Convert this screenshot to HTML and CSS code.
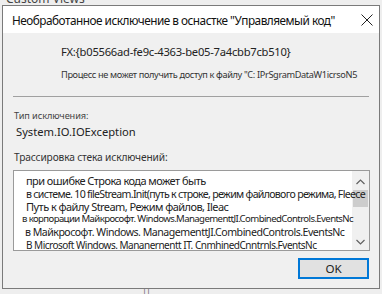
FILE: index.html
```html
<!DOCTYPE html>
<html lang="ru">
<head>
<meta charset="utf-8">
<link rel="stylesheet" href="styles.css">
</head>
<body>
<div class="desk">
  <div class="behind">Custom Views</div>
  <div class="dialog">
    <div class="titlebar">
      <span class="title">Необработанное исключение в оснастке "Управляемый код"</span>
      <svg class="close" width="12" height="12" viewBox="0 0 12 12"><path d="M0.5 0.5 L11.5 11.5 M11.5 0.5 L0.5 11.5" stroke="#222" stroke-width="1" fill="none"/></svg>
    </div>
    <div class="body">
      <div class="head">
        <div class="fx">FX:{b05566ad-fe9c-4363-be05-7a4cbb7cb510}</div>
        <div class="msg">Процесс не может получить доступ к файлу "C: IPrSgramDataW1icrsoN5</div>
      </div>
      <div class="sep"></div>
      <div class="label">Тип исключения:</div>
      <div class="type">System.IO.IOException</div>
      <div class="label2">Трассировка стека исключений:</div>
      <div class="trace">
        <div class="lines">
          <div class="ln l1">при ошибке Строка кода может быть</div>
          <div class="ln l2">в системе. 10 fileStream.Init(путь к строке, режим файлового режима, Fleece</div>
          <div class="ln l3">Путь к файлу Stream, Режим файлов, Ileac</div>
          <div class="ln l4">в корпорации Майкрософт. Windows.ManagementtJI.CombinedControls.EventsNc</div>
          <div class="ln l5">в Майкрософт. Windows. ManagementtJI.CombinedControls.EventsNc</div>
          <div class="ln l6">B Microsoft Windows. Mananernentt IT. CnmhinedCnntrnls.FventsNc</div>
        </div>
        <div class="scroll">
          <svg class="arr" width="9" height="6" viewBox="0 0 9 6"><path d="M0.5 5 L4.5 1 L8.5 5" stroke="#606060" stroke-width="1.2" fill="none"/></svg>
          <div class="thumb"></div>
          <div class="track"></div>
          <svg class="arr" width="9" height="6" viewBox="0 0 9 6"><path d="M0.5 1 L4.5 5 L8.5 1" stroke="#606060" stroke-width="1.2" fill="none"/></svg>
        </div>
      </div>
      <div class="actions">
        <div class="ok">OK</div>
      </div>
    </div>
  </div>
  <div class="under">||</div>
</div>
</body>
</html>
```
FILE: styles.css
```css
html, body { margin: 0; padding: 0; }
body {
  width: 382px; height: 294px; overflow: hidden;
  background: #eeeeee;
  font-family: "Noto Sans", "Open Sans", sans-serif;
  color: #111;
}
.desk { position: relative; width: 382px; height: 294px; }
.behind {
  position: absolute; left: 6px; top: -10px;
  font-size: 12px; color: #444;
}
.under {
  position: absolute; left: 142px; top: 286px;
  font-size: 9px; color: #666; letter-spacing: -1px;
}
.dialog {
  position: absolute; left: 2px; top: 5px;
  width: 376px; height: 282px;
  border: 1px solid #7a7a7a;
  background: #f0f0f0;
  display: flex; flex-direction: column;
}
.titlebar {
  height: 27px; background: #fff;
  display: flex; align-items: center; justify-content: space-between;
  padding: 0 6px 0 9px;
  flex: none;
}
.title { font-size: 11.8px; letter-spacing: -0.5px; color: #111; white-space: nowrap; }
.close { display: block; flex: none; }
.body { flex: 1; display: flex; flex-direction: column; padding: 0 9px 0 10px; min-width: 0; }
.head { padding-left: 48px; }
.fx { margin-top: 11px; font-size: 11.2px; letter-spacing: -0.25px; color: #222; line-height: 16px; }
.msg { margin-top: 8px; font-size: 9.2px; letter-spacing: -0.35px; color: #333; white-space: nowrap; line-height: 13px; }
.sep { margin-top: 15px; height: 1px; background: #a0a0a0; margin-right: 1px; }
.label { margin-top: 13px; margin-left: 1px; font-size: 9.2px; color: #444; line-height: 12px; letter-spacing: -0.1px; }
.type { margin-top: 2px; margin-left: 3px; font-size: 11.2px; color: #222; line-height: 15px; }
.label2 { margin-top: 12px; margin-left: 1px; font-size: 10.2px; color: #333; line-height: 13px; letter-spacing: -0.15px; }
.trace {
  margin-top: 6px; height: 79px;
  border: 1px solid #9a9a9a; background: #fff;
  overflow: hidden;
  display: grid;
  grid-template-columns: minmax(0, 1fr) 17px;
  grid-template-rows: 79px;
}
.lines {
  grid-column: 1 / 3; grid-row: 1;
  padding-top: 4px; position: relative; z-index: 1;
  overflow: hidden; white-space: nowrap; min-width: 0;
}
.ln { line-height: 12.8px; color: #222; }
.l1, .l3 { font-size: 11px; padding-left: 12px; letter-spacing: -0.55px; }
.l2 { font-size: 10.6px; padding-left: 12px; letter-spacing: -0.7px; }
.l4 { font-size: 9.6px; padding-left: 8px; letter-spacing: -0.6px; }
.l5 { font-size: 10.6px; padding-left: 11px; letter-spacing: -0.5px; }
.l6 { font-size: 10px; padding-left: 12px; letter-spacing: -0.5px; }
.scroll {
  grid-column: 2; grid-row: 1;
  background: #f0f0f0;
  display: flex; flex-direction: column; align-items: center;
  padding: 8px 0 5px;
}
.arr { display: block; flex: none; }
.thumb { margin-top: 5px; width: 15px; height: 17px; background: #cdcdcd; flex: none; }
.track { flex: 1; }
.actions { display: flex; justify-content: flex-end; margin-top: 7px; padding-right: 1px; }
.ok {
  width: 67px; height: 17px;
  border: 2px solid #0078d7; background: #e1e1e1;
  font-size: 11.6px; color: #222;
  display: flex; align-items: center; justify-content: center;
}
```
